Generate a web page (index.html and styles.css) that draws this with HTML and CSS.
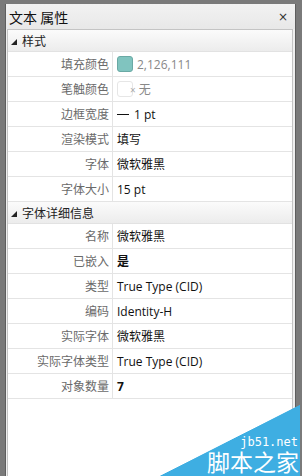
FILE: index.html
```html
<!DOCTYPE html>
<html>
<head>
<meta charset="utf-8">
<link rel="stylesheet" href="styles.css">
</head>
<body>
<div class="window">
  <div class="titlebar">
    <span class="title">文本 属性</span>
    <span class="close">×</span>
  </div>
  <div class="panel">
    <div class="section"><span class="tri"></span>样式</div>
    <div class="row"><div class="label">填充颜色</div><div class="value muted"><span class="swatch fill"></span>2,126,111</div></div>
    <div class="row"><div class="label">笔触颜色</div><div class="value muted"><span class="swatch none"></span><span class="x">×</span>无</div></div>
    <div class="row"><div class="label">边框宽度</div><div class="value"><span class="dash"></span>1 pt</div></div>
    <div class="row"><div class="label">渲染模式</div><div class="value">填写</div></div>
    <div class="row"><div class="label">字体</div><div class="value">微软雅黑</div></div>
    <div class="row"><div class="label">字体大小</div><div class="value">15 pt</div></div>
    <div class="section"><span class="tri"></span>字体详细信息</div>
    <div class="row"><div class="label">名称</div><div class="value">微软雅黑</div></div>
    <div class="row"><div class="label">已嵌入</div><div class="value bold">是</div></div>
    <div class="row"><div class="label">类型</div><div class="value">True Type (CID)</div></div>
    <div class="row"><div class="label">编码</div><div class="value">Identity-H</div></div>
    <div class="row"><div class="label">实际字体</div><div class="value">微软雅黑</div></div>
    <div class="row"><div class="label">实际字体类型</div><div class="value">True Type (CID)</div></div>
    <div class="row"><div class="label">对象数量</div><div class="value bold">7</div></div>
  </div>
</div>
<div class="watermark">
  <div class="wm-url">jb51.net</div>
  <div class="wm-name">脚本之家</div>
</div>
</body>
</html>
```
FILE: styles.css
```css
html, body {
  margin: 0;
  padding: 0;
}
body {
  position: relative;
  width: 302px;
  height: 476px;
  overflow: hidden;
  background: #7a7a7a;
  font-family: "Open Sans", "Noto Sans CJK SC", sans-serif;
  font-size: 12px;
  color: #000;
}
.window {
  margin: 4px 0 0 5px;
  width: 291px;
  height: 472px;
  background: #efefef;
  border-left: 1px solid #5e5e5e;
  border-right: 1px solid #5e5e5e;
  box-sizing: border-box;
  display: flex;
  flex-direction: column;
}
.titlebar {
  height: 25px;
  display: flex;
  align-items: center;
  justify-content: space-between;
  padding: 0 7px 0 3px;
  background: linear-gradient(#f2f2f2, #e8e8e8);
  flex: none;
}
.title {
  font-family: "Noto Sans CJK SC", sans-serif;
  font-size: 14px;
  color: #111;
}
.close {
  font-family: "DejaVu Sans", sans-serif;
  font-size: 12px;
  color: #333;
}
.panel {
  flex: 1;
  margin: 0 2px 0 1px;
  background: #fff;
  border: 1px solid #c4c4c4;
  border-bottom: none;
  overflow: hidden;
}
.section {
  height: 22px;
  display: flex;
  align-items: center;
  padding-left: 2px;
  background: linear-gradient(#fbfbfb, #ececec);
  border-bottom: 1px solid #e2e2e2;
  font-family: "Noto Sans CJK SC", sans-serif;
  font-size: 12px;
  color: #222;
  box-sizing: border-box;
}
.tri {
  width: 0;
  height: 0;
  border-left: 6px solid transparent;
  border-bottom: 6px solid #222;
  margin: 2px 5px 0 1px;
}
.row {
  display: grid;
  grid-template-columns: 105px 1fr;
  height: 25px;
  border-bottom: 1px solid #e4e4e4;
  box-sizing: border-box;
}
.label {
  text-align: right;
  padding-right: 3px;
  color: #6a6a6a;
  font-family: "Noto Sans CJK SC", sans-serif;
  line-height: 24px;
  border-right: 1px solid #e4e4e4;
}
.value {
  display: flex;
  align-items: center;
  padding-left: 4px;
  font-family: "Open Sans", "Noto Sans CJK SC", sans-serif;
  font-size: 12px;
  color: #111;
  white-space: nowrap;
}
.value.muted {
  color: #888;
}
.value.bold {
  font-weight: bold;
}
.swatch {
  width: 16px;
  height: 16px;
  border-radius: 3px;
  box-sizing: border-box;
  margin-right: 4px;
}
.swatch.fill {
  background: #80c4bf;
  border: 1px solid #6aa9a4;
}
.swatch.none {
  background: #fff;
  border: 1px solid #e6e6e6;
  margin-right: 0;
}
.x {
  font-size: 10px;
  color: #aaa;
  margin: 2px 3px 0 -3px;
}
.dash {
  width: 12px;
  height: 1px;
  background: #111;
  margin: 1px 5px 0 0;
}
.watermark {
  position: absolute;
  right: 2px;
  bottom: 0;
  width: 140px;
  height: 71px;
  background: linear-gradient(to bottom right, transparent 49.6%, #3eaee2 50.2%);
  color: #fff;
}
.wm-url {
  position: absolute;
  right: 2px;
  bottom: 28px;
  font-family: "DejaVu Sans Mono", monospace;
  font-size: 12px;
  line-height: 12px;
}
.wm-name {
  position: absolute;
  right: 1px;
  bottom: 4px;
  font-family: "Noto Sans CJK SC", sans-serif;
  font-size: 23px;
  line-height: 22px;
}
```
